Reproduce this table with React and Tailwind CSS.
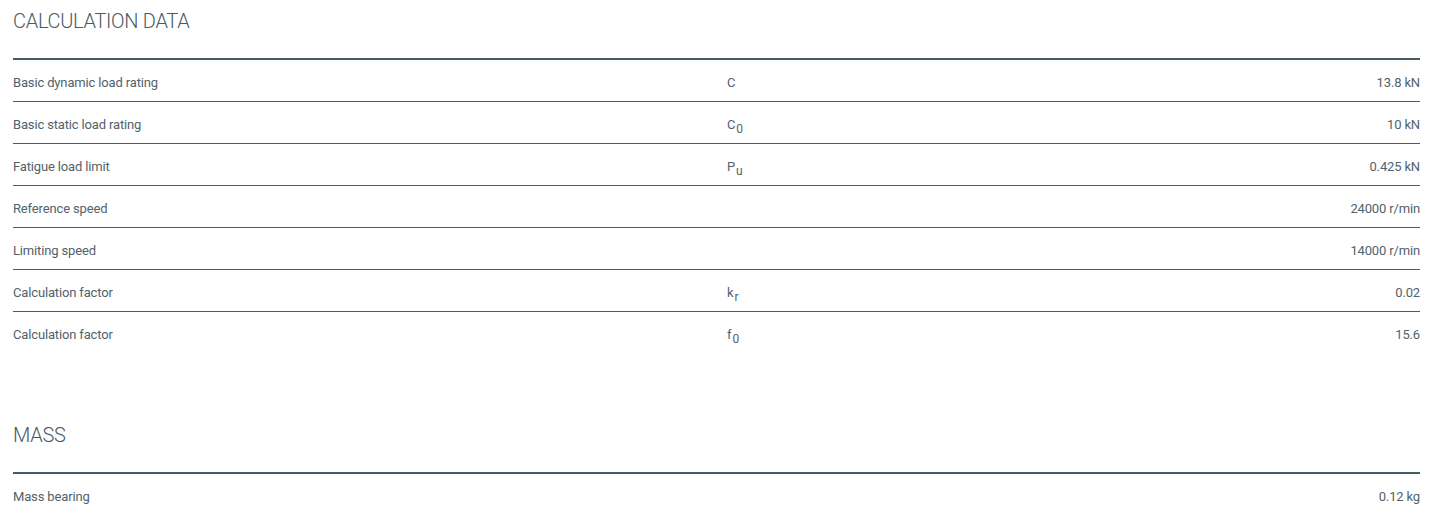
import React from "react";

const calcRows = [
  { label: "Basic dynamic load rating", sym: "C", sub: "", value: "13.8 kN" },
  { label: "Basic static load rating", sym: "C", sub: "0", value: "10 kN" },
  { label: "Fatigue load limit", sym: "P", sub: "u", value: "0.425 kN" },
  { label: "Reference speed", sym: "", sub: "", value: "24000 r/min" },
  { label: "Limiting speed", sym: "", sub: "", value: "14000 r/min" },
  { label: "Calculation factor", sym: "k", sub: "r", value: "0.02" },
  { label: "Calculation factor", sym: "f", sub: "0", value: "15.6" },
];

const massRows = [{ label: "Mass bearing", sym: "", sub: "", value: "0.12 kg" }];

const Row = ({ row, last }) => (
  <div
    className={`h-[42px] flex items-center pt-[4px] text-[13px] tracking-[-0.15px] text-[#52626b] ${
      last ? "" : "border-b border-[#4f5a61]"
    }`}
  >
    <div className="w-[714px]">{row.label}</div>
    <div className="flex-1">
      {row.sym}
      {row.sub && (
        <span className="text-[12px] relative top-[4px] ml-[1px]">{row.sub}</span>
      )}
    </div>
    <div className="text-right">{row.value}</div>
  </div>
);

const Section = ({ title, rows, className = "" }) => (
  <section className={className}>
    <h2 className="h-[60px] border-b-2 border-[#485a64] text-[20px] tracking-[-0.3px] font-light leading-[30px] pt-[6px] text-[#485a64]">
      {title}
    </h2>
    {rows.map((row, i) => (
      <Row key={i} row={row} last={i === rows.length - 1} />
    ))}
  </section>
);

export default function App() {
  return (
    <div
      className="bg-white w-[1450px] h-[517px] overflow-hidden pl-[13px] pr-[30px]"
      style={{ fontFamily: "Roboto, 'Liberation Sans', sans-serif" }}
    >
      <Section title="CALCULATION DATA" rows={calcRows} />
      <Section title="MASS" rows={massRows} className="mt-[60px]" />
    </div>
  );
}
